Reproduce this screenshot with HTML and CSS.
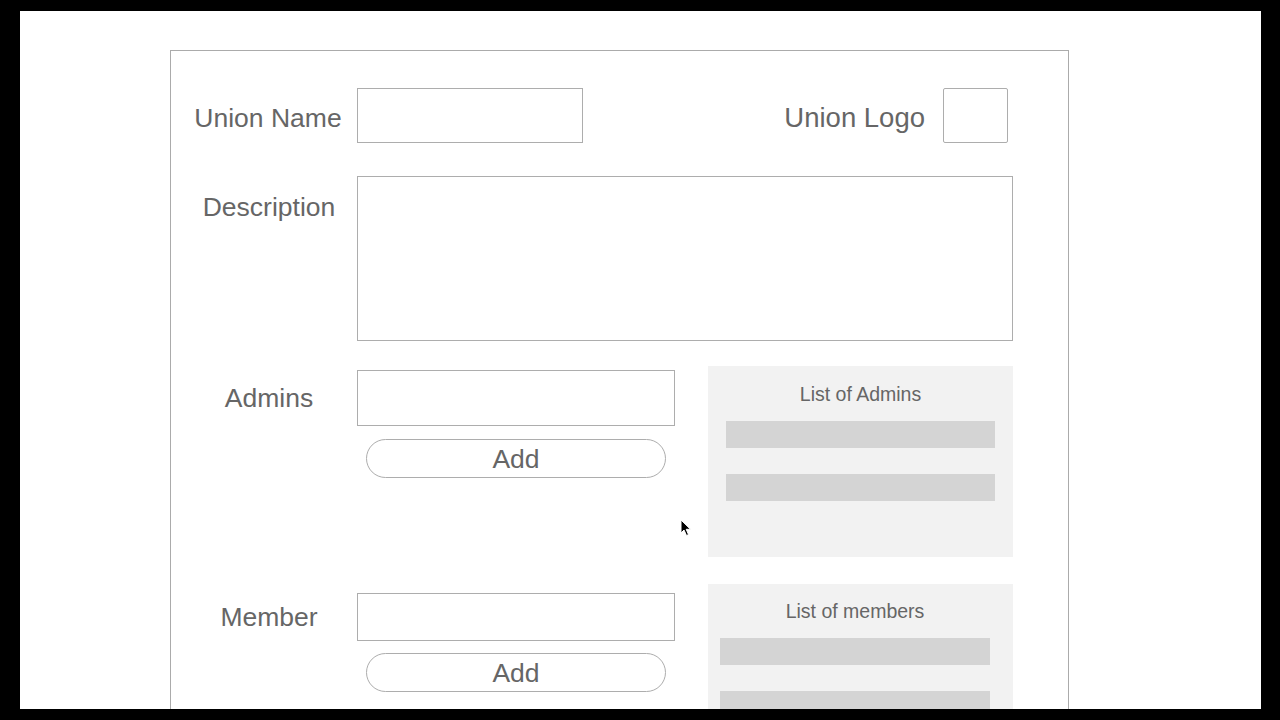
FILE: index.html
```html
<!DOCTYPE html>
<html>
<head>
<meta charset="utf-8">
<link rel="stylesheet" href="styles.css">
</head>
<body>
<div class="screen">
  <div class="card">
    <div class="row row-top">
      <div class="label label-name">Union Name</div>
      <div class="input input-name"></div>
      <div class="logo-group">
        <div class="label-logo">Union Logo</div>
        <div class="logo-box"></div>
      </div>
    </div>
    <div class="row row-desc">
      <div class="label label-desc">Description</div>
      <div class="textarea"></div>
    </div>
    <div class="row row-admins">
      <div class="label label-admins">Admins</div>
      <div class="entry entry-admins">
        <div class="input input-admins"></div>
        <div class="btn">Add</div>
      </div>
      <div class="panel panel-admins">
        <div class="panel-title">List of Admins</div>
        <div class="bar"></div>
        <div class="bar"></div>
      </div>
    </div>
    <div class="row row-members">
      <div class="label label-member">Member</div>
      <div class="entry entry-member">
        <div class="input input-member"></div>
        <div class="btn btn-member">Add</div>
      </div>
      <div class="panel panel-members">
        <div class="panel-title">List of members</div>
        <div class="bar"></div>
        <div class="bar"></div>
      </div>
    </div>
  </div>
  <svg class="cursor" width="12" height="18" viewBox="0 0 12 18">
    <path d="M1 1 L1 14 L4 11 L6.5 16.5 L8.5 15.6 L6.2 10.3 L10.5 10.3 Z" fill="#000" stroke="#fff" stroke-width="1"/>
  </svg>
</div>
</body>
</html>
```

FILE: styles.css
```css
html, body {
  margin: 0;
  padding: 0;
  background: #000;
  width: 1280px;
  height: 720px;
  overflow: hidden;
}
.screen {
  position: relative;
  margin: 11px 19px 0 20px;
  height: 698px;
  background: #fff;
  overflow: hidden;
  font-family: "Liberation Sans", Arial, Helvetica, sans-serif;
  color: #666;
}
.card {
  margin-left: 150px;
  margin-top: 39px;
  width: 897px;
  height: 720px;
  border: 1px solid #ababab;
  box-sizing: content-box;
  padding-top: 37px;
}
.row {
  display: flex;
  padding-right: 55px;
}
.label {
  margin-left: 10px;
  width: 176px;
  flex: none;
  font-size: 26.5px;
  line-height: 30px;
  text-align: center;
  align-self: center;
}
.label-name {
  padding-top: 4px;
  margin-left: 8px;
  width: 178px;
}
.input {
  border: 1px solid #adadad;
  box-sizing: border-box;
  background: #fff;
}
.input-name {
  width: 226px;
  height: 55px;
}
.logo-group {
  margin-left: auto;
  margin-right: 5px;
  display: flex;
  align-items: center;
  gap: 18px;
}
.label-logo {
  font-size: 27.5px;
  line-height: 30px;
  padding-top: 4px;
}
.logo-box {
  width: 65px;
  height: 55px;
  border: 1px solid #adadad;
  border-radius: 2px;
  box-sizing: border-box;
}
.row-desc {
  margin-top: 33px;
}
.label-desc {
  align-self: flex-start;
  margin-top: 16px;
}
.textarea {
  width: 657px;
  height: 165px;
  border: 1px solid #adadad;
  box-sizing: border-box;
}
.row-admins {
  margin-top: 25px;
  align-items: flex-start;
}
.label-admins {
  align-self: flex-start;
  margin-top: 5px;
  height: 55px;
  line-height: 55px;
}
.entry {
  width: 318px;
  flex: none;
  display: flex;
  flex-direction: column;
}
.entry-admins {
  margin-top: 4px;
}
.input-admins {
  height: 56px;
}
.btn {
  margin-top: 13px;
  margin-left: 9px;
  width: 300px;
  height: 39px;
  border: 1px solid #adadad;
  border-radius: 20px;
  box-sizing: border-box;
  text-align: center;
  font-size: 26.5px;
  line-height: 38px;
}
.panel {
  margin-left: 33px;
  width: 305px;
  flex: none;
  background: #f2f2f2;
  box-sizing: border-box;
  display: flex;
  flex-direction: column;
}
.panel-admins {
  height: 191px;
  padding: 16px 18px 0 18px;
}
.panel-title {
  font-size: 19.5px;
  line-height: 24px;
  text-align: center;
  margin-bottom: 15px;
}
.bar {
  height: 27px;
  background: #d4d4d4;
  margin-bottom: 26px;
}
.row-members {
  margin-top: 27px;
  align-items: flex-start;
}
.label-member {
  align-self: flex-start;
  margin-top: 9px;
  height: 48px;
  line-height: 48px;
}
.entry-member {
  margin-top: 9px;
}
.input-member {
  height: 48px;
}
.btn-member {
  margin-top: 12px;
}
.panel-members {
  height: 200px;
  padding: 15px 23px 0 12px;
}
.cursor {
  position: absolute;
  left: 660px;
  top: 508px;
}
```
